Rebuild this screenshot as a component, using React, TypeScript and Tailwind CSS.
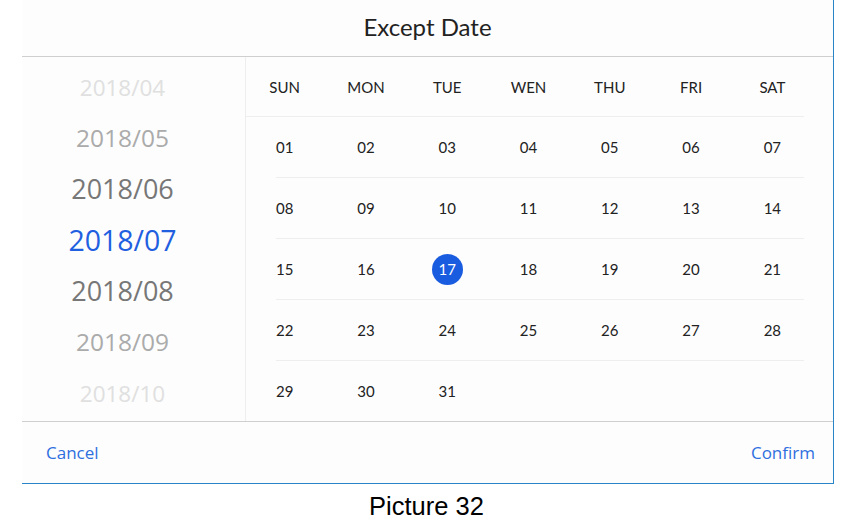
import React from "react";

const months = [
  { t: "2018/04", cls: "text-[22.5px] text-[#e0e0e0]" },
  { t: "2018/05", cls: "text-[24.5px] text-[#ababab]" },
  { t: "2018/06", cls: "text-[27px] text-[#777777]" },
  { t: "2018/07", cls: "text-[28.5px] text-[#1f5fe0]" },
  { t: "2018/08", cls: "text-[27px] text-[#777777]" },
  { t: "2018/09", cls: "text-[24.5px] text-[#ababab]" },
  { t: "2018/10", cls: "text-[22.5px] text-[#e0e0e0]" },
];

const days = ["SUN", "MON", "TUE", "WEN", "THU", "FRI", "SAT"];

const weeks: (string | null)[][] = [
  ["01", "02", "03", "04", "05", "06", "07"],
  ["08", "09", "10", "11", "12", "13", "14"],
  ["15", "16", "17", "18", "19", "20", "21"],
  ["22", "23", "24", "25", "26", "27", "28"],
  ["29", "30", "31", null, null, null, null],
];

export default function App() {
  return (
    <div className="w-[853px] h-[522px] bg-white flex flex-col overflow-hidden" style={{ fontFamily: "Lato, 'Noto Sans', sans-serif" }}>
      <div className="ml-[22px] w-[812px] h-[484px] shrink-0 bg-[#fdfdfd] flex flex-col border-r border-b border-[#2a85c6]">
        <div className="h-[57px] flex items-center justify-center border-b border-[#cfcfcf] shrink-0">
          <span className="text-[24px] text-[#222] pb-[2px]">Except Date</span>
        </div>
        <div className="h-[364px] flex shrink-0">
          <div className="w-[224px] border-r border-[#eeeeee] flex flex-col pt-[5px] pr-[22px]" style={{ fontFamily: "'Open Sans', 'Noto Sans', sans-serif" }}>
            {months.map((m) => (
              <div key={m.t} className={`h-[51px] flex items-center justify-center ${m.cls}`}>
                {m.t}
              </div>
            ))}
          </div>
          <div className="flex flex-col -ml-[2px]">
            <div className="w-[569px] h-[60px] pt-[2px] grid grid-cols-7 items-center">
              {days.map((d) => (
                <div key={d} className="text-center text-[15px] text-[#222]">{d}</div>
              ))}
            </div>
            <div className="ml-[2px] w-[558px] h-px bg-[#eeeeee]" />
            {weeks.map((w, i) => (
              <div key={i} className="flex flex-col">
                {i > 0 && <div className="ml-[32px] w-[528px] h-px bg-[#eeeeee]" />}
                <div className="w-[569px] h-[60px] pt-[1px] grid grid-cols-7 items-center">
                  {w.map((d, j) => (
                    <div key={j} className="flex justify-center">
                      {d === "17" ? (
                        <span className="w-[31px] h-[31px] rounded-full bg-[#1a5ce0] text-white flex items-center justify-center text-[15px]">17</span>
                      ) : (
                        <span className="text-[15px] text-[#222]">{d ?? ""}</span>
                      )}
                    </div>
                  ))}
                </div>
              </div>
            ))}
          </div>
        </div>
        <div className="flex-1 border-t border-[#cfcfcf] flex items-center justify-between pl-[24px] pr-[18px] pt-[1px]" style={{ fontFamily: "'Open Sans', 'Noto Sans', sans-serif" }}>
          <span className="text-[17px] text-[#2f6fe0]">Cancel</span>
          <span className="text-[17px] text-[#2f6fe0]">Confirm</span>
        </div>
      </div>
      <div className="flex-1 flex items-center justify-center pt-[8px] text-[25.5px] leading-none text-black" style={{ fontFamily: "'Liberation Sans', Arial, sans-serif" }}>
        Picture 32
      </div>
    </div>
  );
}
